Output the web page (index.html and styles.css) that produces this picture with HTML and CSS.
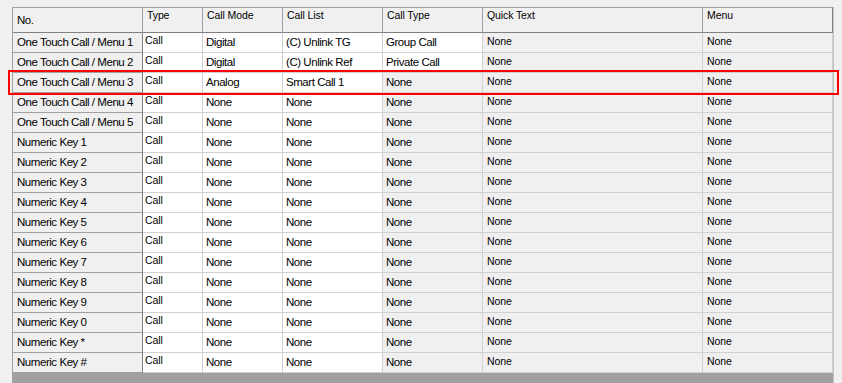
FILE: index.html
```html
<!DOCTYPE html>
<html>
<head>
<meta charset="utf-8">
<link rel="stylesheet" href="styles.css">
</head>
<body>
<div class="grid">
  <div class="row head">
    <div class="hc big">No.</div>
    <div class="hc sm">Type</div>
    <div class="hc sm">Call Mode</div>
    <div class="hc sm">Call List</div>
    <div class="hc sm">Call Type</div>
    <div class="hc sm">Quick Text</div>
    <div class="hc sm last">Menu</div>
  </div>
  <div class="row"><div class="rh">One Touch Call / Menu 1</div><div class="c t">Call</div><div class="c w">Digital</div><div class="c w">(C) Unlink TG</div><div class="c w">Group Call</div><div class="c g s">None</div><div class="c g s">None</div></div>
  <div class="row"><div class="rh">One Touch Call / Menu 2</div><div class="c t">Call</div><div class="c w">Digital</div><div class="c w">(C) Unlink Ref</div><div class="c w">Private Call</div><div class="c g s">None</div><div class="c g s">None</div></div>
  <div class="row"><div class="rh">One Touch Call / Menu 3</div><div class="c t">Call</div><div class="c w">Analog</div><div class="c w">Smart Call 1</div><div class="c g l">None</div><div class="c g s">None</div><div class="c g s">None</div></div>
  <div class="row"><div class="rh">One Touch Call / Menu 4</div><div class="c t">Call</div><div class="c w">None</div><div class="c w">None</div><div class="c g l">None</div><div class="c g s">None</div><div class="c g s">None</div></div>
  <div class="row"><div class="rh">One Touch Call / Menu 5</div><div class="c t">Call</div><div class="c w">None</div><div class="c w">None</div><div class="c g l">None</div><div class="c g s">None</div><div class="c g s">None</div></div>
  <div class="row"><div class="rh">Numeric Key 1</div><div class="c t">Call</div><div class="c w">None</div><div class="c w">None</div><div class="c g l">None</div><div class="c g s">None</div><div class="c g s">None</div></div>
  <div class="row"><div class="rh">Numeric Key 2</div><div class="c t">Call</div><div class="c w">None</div><div class="c w">None</div><div class="c g l">None</div><div class="c g s">None</div><div class="c g s">None</div></div>
  <div class="row"><div class="rh">Numeric Key 3</div><div class="c t">Call</div><div class="c w">None</div><div class="c w">None</div><div class="c g l">None</div><div class="c g s">None</div><div class="c g s">None</div></div>
  <div class="row"><div class="rh">Numeric Key 4</div><div class="c t">Call</div><div class="c w">None</div><div class="c w">None</div><div class="c g l">None</div><div class="c g s">None</div><div class="c g s">None</div></div>
  <div class="row"><div class="rh">Numeric Key 5</div><div class="c t">Call</div><div class="c w">None</div><div class="c w">None</div><div class="c g l">None</div><div class="c g s">None</div><div class="c g s">None</div></div>
  <div class="row"><div class="rh">Numeric Key 6</div><div class="c t">Call</div><div class="c w">None</div><div class="c w">None</div><div class="c g l">None</div><div class="c g s">None</div><div class="c g s">None</div></div>
  <div class="row"><div class="rh">Numeric Key 7</div><div class="c t">Call</div><div class="c w">None</div><div class="c w">None</div><div class="c g l">None</div><div class="c g s">None</div><div class="c g s">None</div></div>
  <div class="row"><div class="rh">Numeric Key 8</div><div class="c t">Call</div><div class="c w">None</div><div class="c w">None</div><div class="c g l">None</div><div class="c g s">None</div><div class="c g s">None</div></div>
  <div class="row"><div class="rh">Numeric Key 9</div><div class="c t">Call</div><div class="c w">None</div><div class="c w">None</div><div class="c g l">None</div><div class="c g s">None</div><div class="c g s">None</div></div>
  <div class="row"><div class="rh">Numeric Key 0</div><div class="c t">Call</div><div class="c w">None</div><div class="c w">None</div><div class="c g l">None</div><div class="c g s">None</div><div class="c g s">None</div></div>
  <div class="row"><div class="rh">Numeric Key *</div><div class="c t">Call</div><div class="c w">None</div><div class="c w">None</div><div class="c g l">None</div><div class="c g s">None</div><div class="c g s">None</div></div>
  <div class="row"><div class="rh">Numeric Key #</div><div class="c t">Call</div><div class="c w">None</div><div class="c w">None</div><div class="c g l">None</div><div class="c g s">None</div><div class="c g s">None</div></div>
</div>
<div class="sel"></div>
</body>
</html>
```
FILE: styles.css
```css
html, body {
  margin: 0;
  padding: 0;
}
body {
  background: #f0f0f0;
  overflow: hidden;
  position: relative;
  width: 842px;
  height: 383px;
  font-family: "Liberation Sans", Arial, sans-serif;
  color: #000;
}
.grid {
  margin: 7px 0 0 12px;
  width: 820px;
  height: 375px;
  border-top: 1px solid #a0a0a0;
  border-left: 1px solid #a0a0a0;
  border-right: 1px solid #c4c4c4;
  background: #a0a0a0;
}
.row {
  display: grid;
  grid-template-columns: 130px 60px 80px 100px 100px 220px 130px;
  height: 20px;
}
.row.head {
  height: 25px;
}
.row > div {
  box-sizing: border-box;
  white-space: nowrap;
  overflow: hidden;
}
.hc {
  background: #f0f0f0;
  border-right: 1px solid #a0a0a0;
  border-bottom: 1px solid #808080;
  padding-left: 4px;
}
.hc.last {
  border-right-color: #808080;
}
.big {
  font-size: 11.5px;
  letter-spacing: -0.45px;
  line-height: 24px;
}
.sm {
  font-size: 10.5px;
  letter-spacing: -0.1px;
  line-height: 13px;
  padding-top: 1px;
}
.rh {
  background: #f0f0f0;
  border-right: 1px solid #808080;
  border-bottom: 1px solid #a0a0a0;
  padding-left: 4px;
  font-size: 11.5px;
  letter-spacing: -0.45px;
  line-height: 19px;
}
.c {
  border-right: 1px solid #d0d0d0;
  border-bottom: 1px solid #d0d0d0;
}
.w, .l {
  font-size: 11.5px;
  letter-spacing: -0.45px;
  line-height: 19px;
  padding-left: 3px;
}
.w, .t {
  background: #fff;
}
.g {
  background: #f0f0f0;
}
.t {
  font-size: 10.5px;
  letter-spacing: -0.1px;
  line-height: 13px;
  padding: 1px 0 0 2px;
}
.s {
  font-size: 10.5px;
  letter-spacing: -0.1px;
  line-height: 13px;
  padding: 2px 0 0 4px;
}
.sel {
  position: absolute;
  left: 8px;
  top: 70px;
  width: 827px;
  height: 21px;
  border: 2px solid #f00;
}
```
